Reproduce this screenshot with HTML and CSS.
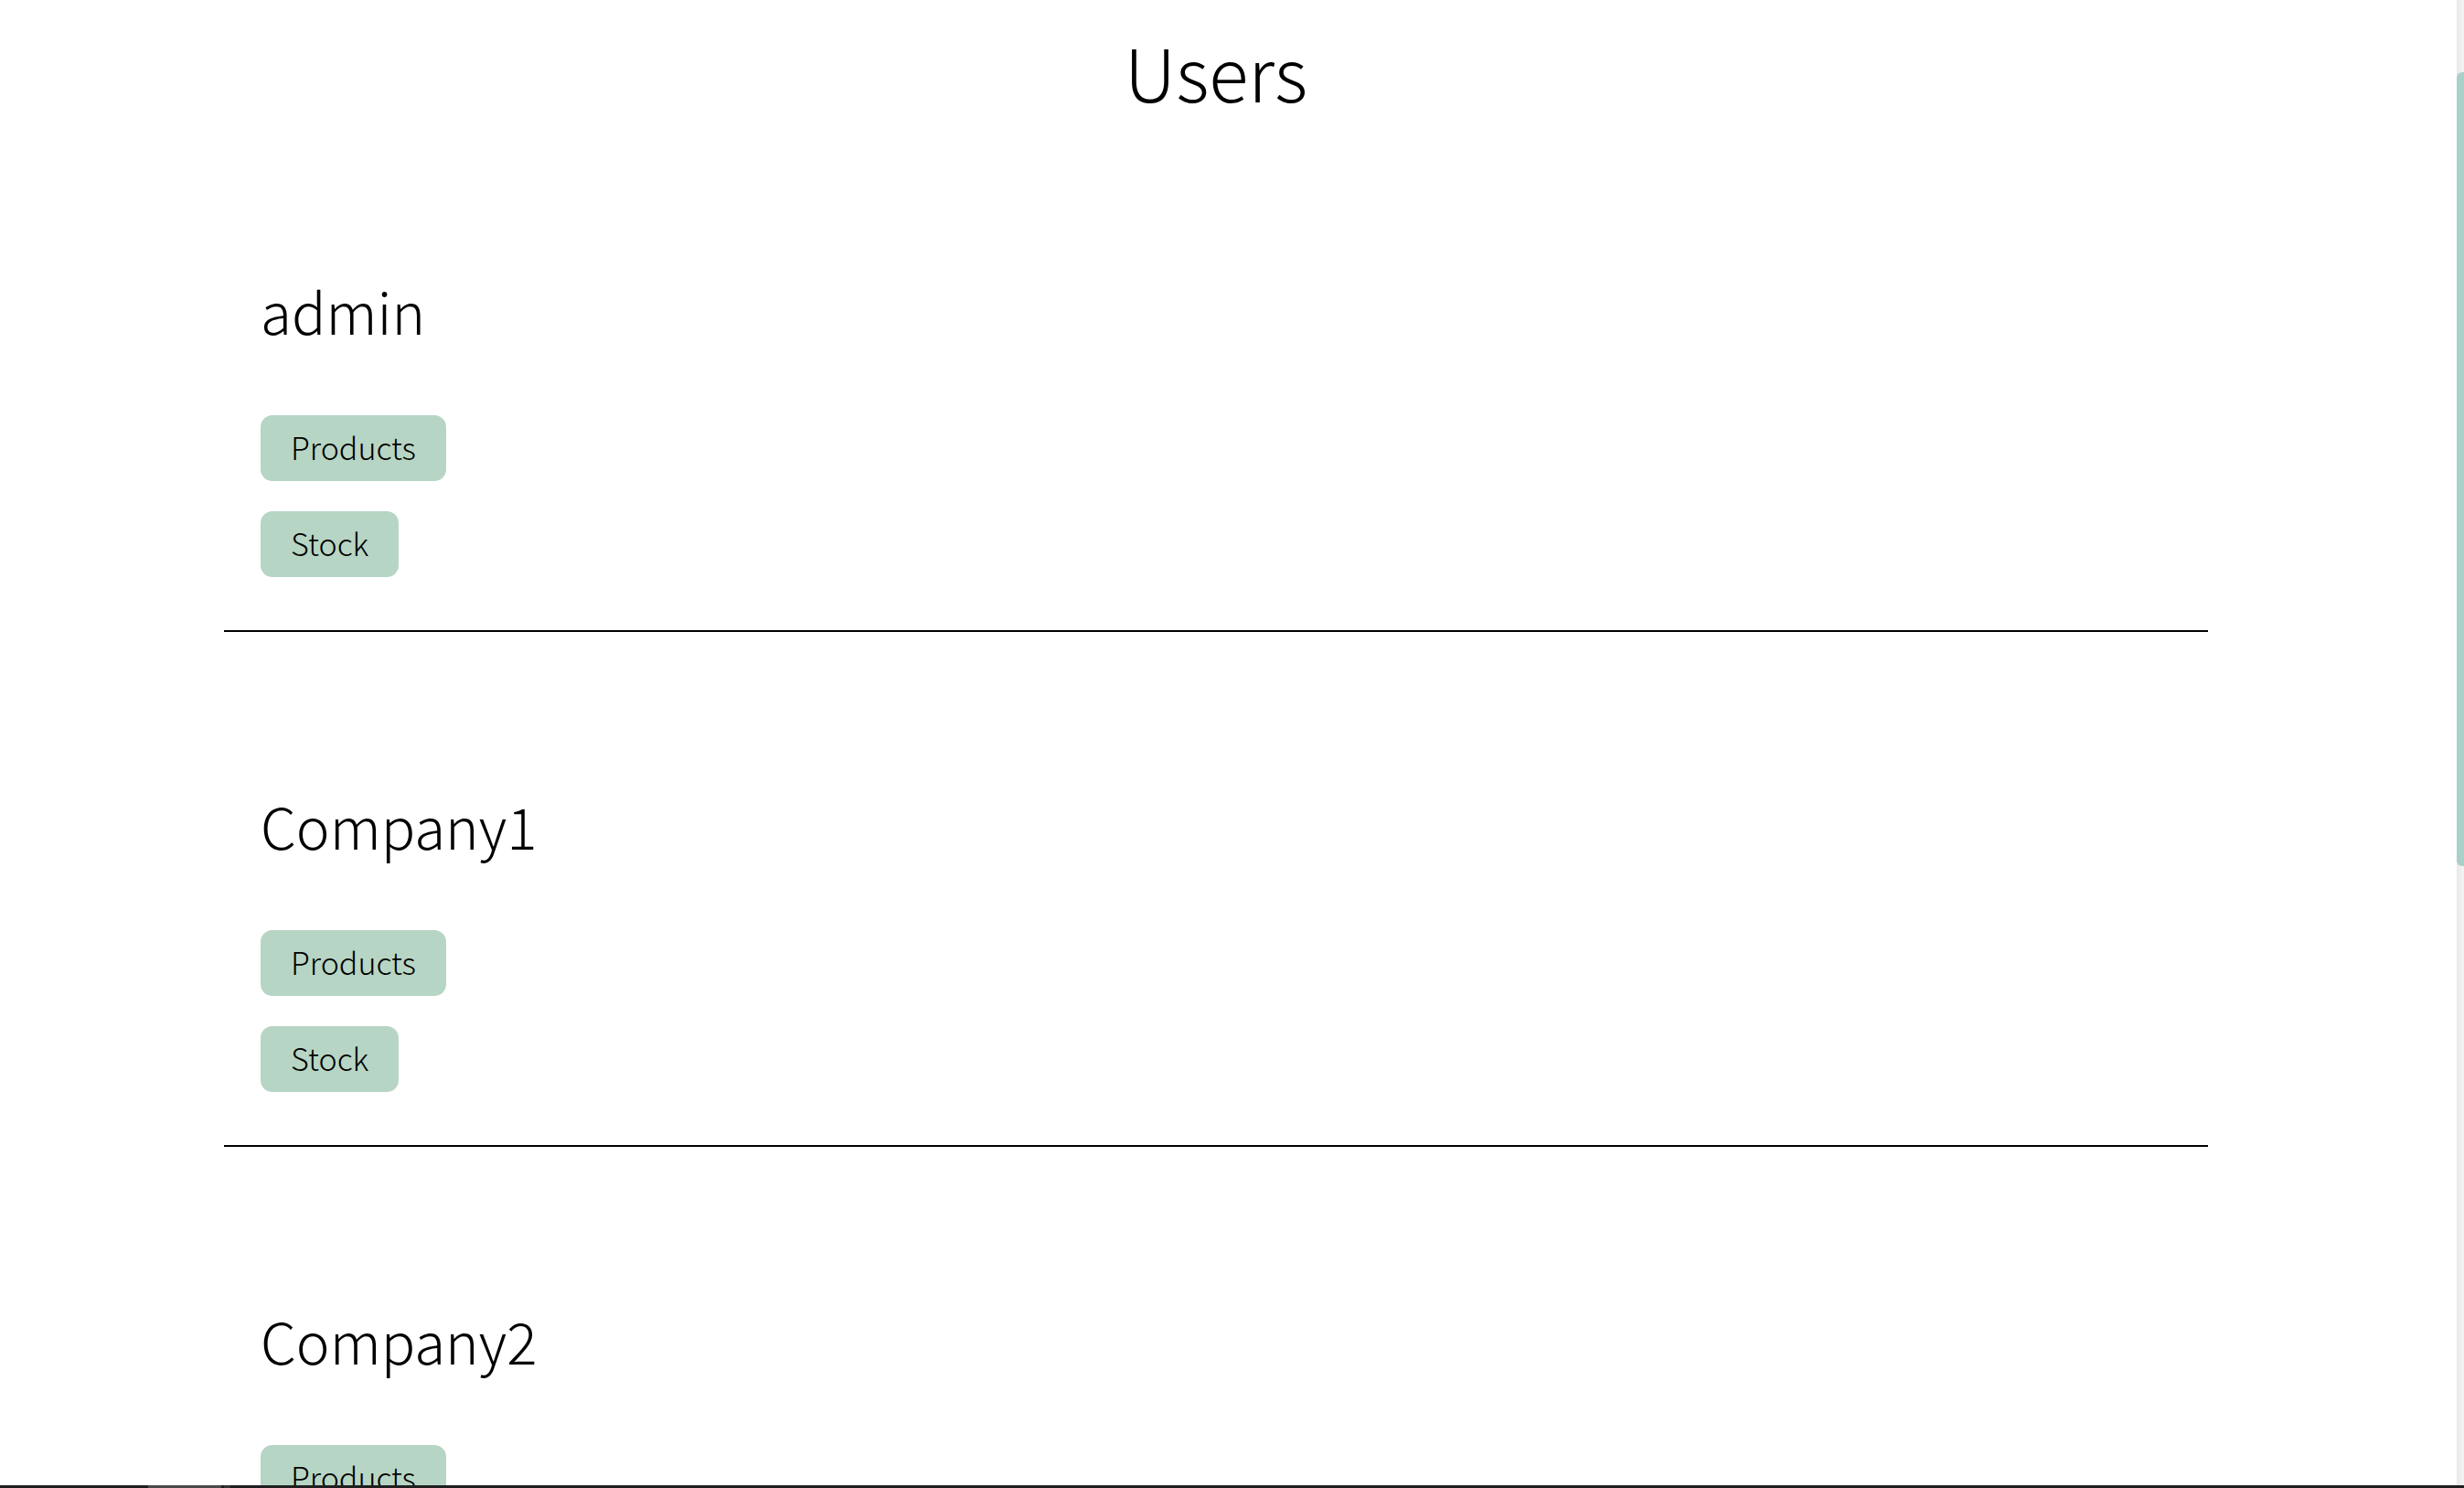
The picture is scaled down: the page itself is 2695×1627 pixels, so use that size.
FILE: index.html
```html
<!DOCTYPE html>
<html lang="en">
<head>
<meta charset="utf-8">
<title>Users</title>
<link rel="stylesheet" href="styles.css">
</head>
<body>
<div class="window">
  <div class="viewport">
    <main class="page">
      <h1 class="title">Users</h1>

      <section class="user">
        <h2 class="user-name">admin</h2>
        <div class="actions">
          <button class="btn" type="button">Products</button>
          <button class="btn" type="button">Stock</button>
        </div>
      </section>

      <section class="user">
        <h2 class="user-name">Company1</h2>
        <div class="actions">
          <button class="btn" type="button">Products</button>
          <button class="btn" type="button">Stock</button>
        </div>
      </section>

      <section class="user">
        <h2 class="user-name">Company2</h2>
        <div class="actions">
          <button class="btn" type="button">Products</button>
          <button class="btn" type="button">Stock</button>
        </div>
      </section>
    </main>
  </div>
  <div class="scrollbar"><div class="scroll-thumb"></div></div>
</div>
<div class="taskbar"><span class="tb-seg tb-seg-a"></span><span class="tb-seg tb-seg-b"></span></div>
</body>
</html>
```

FILE: styles.css
```css
html, body {
  margin: 0;
  padding: 0;
  height: 1627px;
  overflow: hidden;
  background: #ffffff;
}

body {
  font-family: "Noto Sans CJK KR", "Noto Sans", sans-serif;
  color: #000;
  font-weight: 300;
}

.window {
  display: flex;
  height: 1624px;
}

.viewport {
  flex: 1;
  overflow: hidden;
}

.page {
  width: 2170px;
  margin-left: 245px;
}

.title {
  margin: 27px 0 0;
  font-size: 80px;
  line-height: 100px;
  font-weight: 300;
  text-align: center;
}

.user {
  margin-top: 170px;
  padding: 0 0 58px 40px;
  border-bottom: 2px solid #000;
}

.user:first-of-type {
  margin-top: 171px;
}

.user-name {
  margin: 0;
  font-size: 62px;
  line-height: 82px;
  font-weight: 300;
}

.actions {
  margin-top: 74px;
  display: flex;
  flex-direction: column;
  align-items: flex-start;
  gap: 33px;
}

.btn {
  box-sizing: border-box;
  font-family: inherit;
  font-weight: 300;
  font-size: 34px;
  height: 72px;
  line-height: 69px;
  padding: 0 33px 3px;
  border: none;
  border-radius: 13px;
  background: #b7d5c4;
  color: #000;
}

.scrollbar {
  width: 8px;
  background: linear-gradient(to right, #e9e9e9, #f3f3f3);
}

.scroll-thumb {
  margin-top: 79px;
  height: 868px;
  background: #a9d0ca;
  border-radius: 6px 0 0 6px;
}

.taskbar {
  display: flex;
  height: 3px;
  background: #1f1f1f;
}

.tb-seg {
  height: 3px;
}

.tb-seg-a {
  margin-left: 162px;
  width: 80px;
  background: #4a4a4a;
}

.tb-seg-b {
  margin-left: 3px;
  width: 7px;
  background: #343434;
}
```
